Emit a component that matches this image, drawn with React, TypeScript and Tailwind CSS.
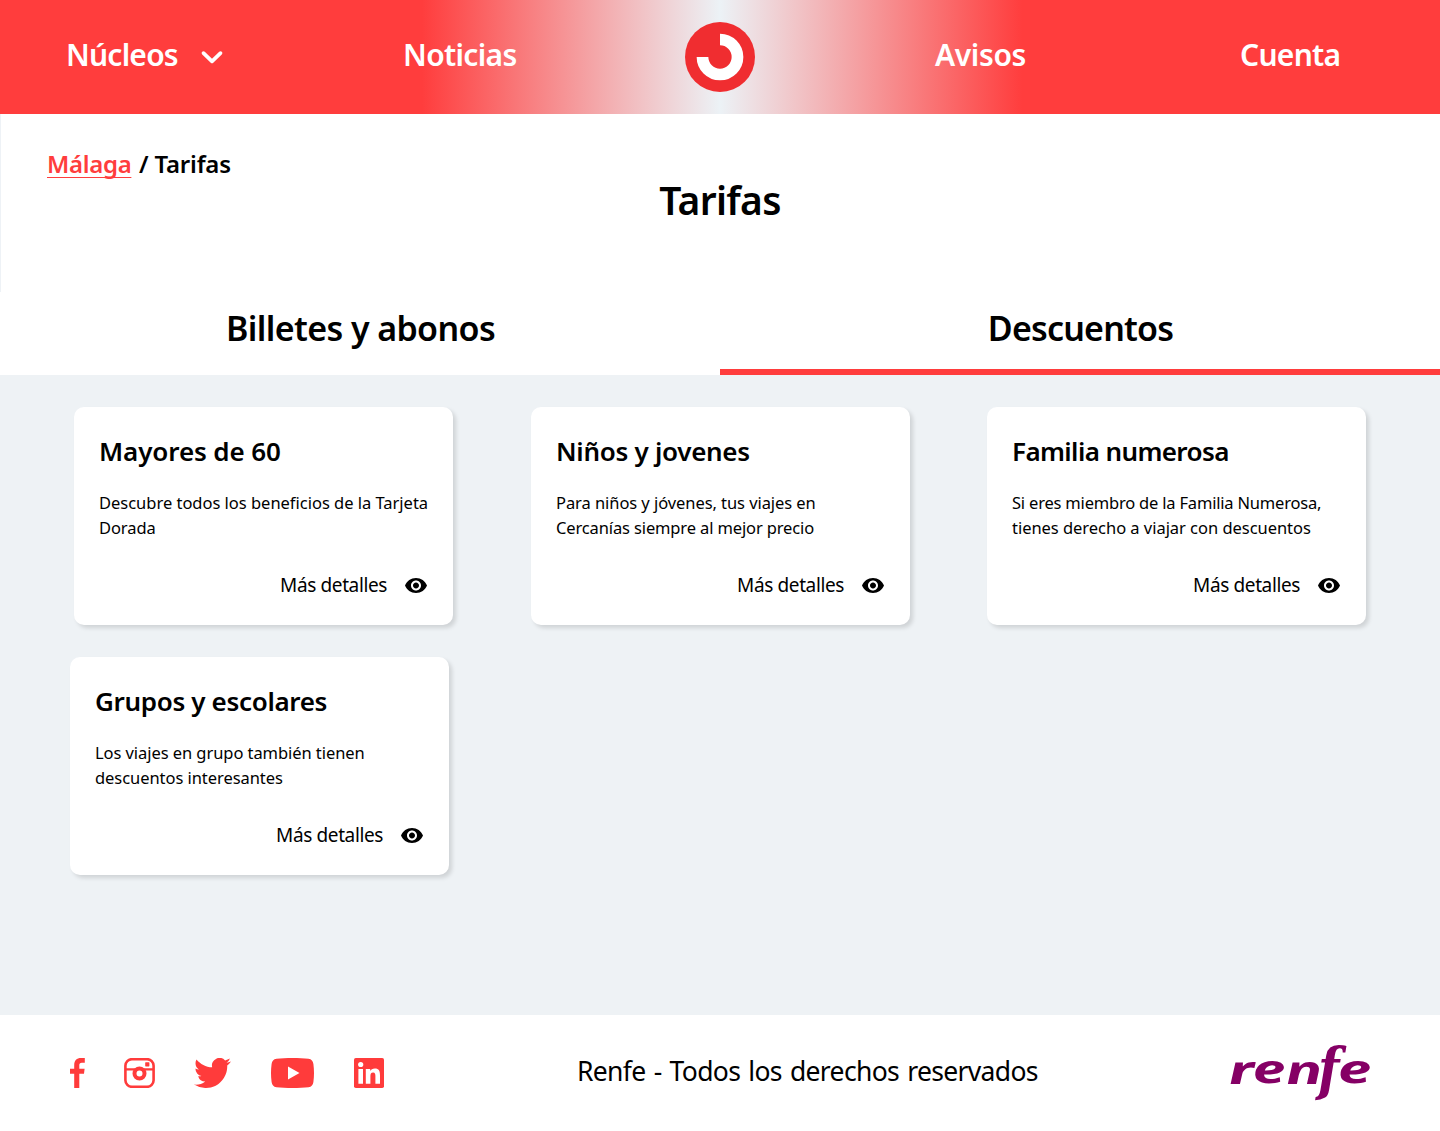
import React from "react";

function ChevronDown() {
  return (
    <svg width="24" height="16" viewBox="0 0 24 16" fill="none" aria-hidden="true">
      <path d="M3.5 4.1 12 12.300l8.500-8.200" stroke="#fff" strokeWidth="3.7" strokeLinecap="round" strokeLinejoin="round" />
    </svg>
  );
}

function CercaniasLogo() {
  return (
    <svg width="70" height="70" viewBox="0 0 70 70" role="img" aria-label="Cercanías">
      <circle cx="35" cy="35" r="35" fill="#f02d30" />
      <path d="M35 17.500A17.500 17.500 0 1 1 17.500 35" fill="none" stroke="#fff" strokeWidth="11.7" />
    </svg>
  );
}

function EyeIcon() {
  return (
    <svg className="mt-px" width="22" height="15" viewBox="1 4.5 22 15" aria-hidden="true">
      <path d="M12 4.5C7 4.5 2.73 7.61 1 12c1.73 4.39 6 7.5 11 7.5s9.27-3.11 11-7.5c-1.73-4.39-6-7.5-11-7.5zM12 17c-2.76 0-5-2.24-5-5s2.24-5 5-5 5 2.24 5 5-2.24 5-5 5zm0-8c-1.66 0-3 1.34-3 3s1.34 3 3 3 3-1.34 3-3-1.34-3-3-3z" />
    </svg>
  );
}

function SocialLinks() {
  return (
    <div className="flex h-[30px] items-center text-[#ff3b3b]">
      <svg width="15" height="30" viewBox="0 0 15 30" fill="currentColor" aria-label="Facebook">
        <path d="M4.2 30V15.8H0v-5.1h4.2V7.2C4.2 2.5 6.8 0 10.9 0H14.800v4.800h-3C9.900 4.800 9.300 5.700 9.300 7.300v3.400h5.300l-.6 5.100H9.300V30z" />
      </svg>
      <svg className="ml-[39px]" width="31" height="30" viewBox="0 0 31 30" fill="none" stroke="currentColor" aria-label="Instagram">
        <rect x="1.400" y="1.200" width="28.200" height="27.600" rx="6.500" strokeWidth="2.600" />
        <path d="M1 11.400h10M20 11.400H30" strokeWidth="2.200" />
        <circle cx="15.500" cy="15.500" r="5" strokeWidth="4" />
        <rect x="21.200" y="4.200" width="4.200" height="4.200" rx="0.600" fill="currentColor" stroke="none" />
      </svg>
      <svg className="ml-[39px]" width="37" height="30" viewBox="0 2.250 24 19.500" fill="currentColor" preserveAspectRatio="none" aria-label="Twitter">
        <path d="M23.953 4.57a10 10 0 01-2.825.775 4.958 4.958 0 002.163-2.723c-.951.555-2.005.959-3.127 1.184a4.92 4.92 0 00-8.384 4.482C7.69 8.095 4.067 6.13 1.64 3.162a4.822 4.822 0 00-.666 2.475c0 1.71.87 3.213 2.188 4.096a4.904 4.904 0 01-2.228-.616v.06a4.923 4.923 0 003.946 4.827 4.996 4.996 0 01-2.212.085 4.936 4.936 0 004.604 3.417 9.867 9.867 0 01-6.102 2.105c-.39 0-.779-.023-1.17-.067a13.995 13.995 0 007.557 2.209c9.053 0 13.998-7.496 13.998-13.985 0-.21 0-.42-.015-.63A9.935 9.935 0 0024 4.59z" />
      </svg>
      <svg className="ml-10" width="43" height="30" viewBox="0 0 43 30" fill="currentColor" aria-label="YouTube">
        <path d="M5.500.8C14 -.2 29 -.2 37.500.8 40.500 1.200 42 3 42.400 6c.8 6 .8 12 0 18-.4 3-1.900 4.800-4.900 5.200-8.500 1-23.500 1-32 0C2.500 28.800 1 27 .6 24-.2 18-.2 12 .6 6 1 3 2.500 1.200 5.500.8zM17 8.500v13L28.500 15z" />
      </svg>
      <svg className="ml-10" width="30" height="30" viewBox="0 0 30 30" aria-label="LinkedIn">
        <rect width="30" height="30" rx="1.800" fill="currentColor" />
        <circle cx="6.700" cy="6.500" r="2.600" fill="#fff" />
        <path d="M4.400 11h4.600v14.800H4.400zM11.800 11h4.400v2.100c.8-1.500 2.400-2.500 4.600-2.500 4.200 0 5.200 2.700 5.200 6.800v8.400h-4.600v-7.500c0-2-.2-3.800-2.300-3.800-2.200 0-2.700 1.700-2.700 3.700v7.600h-4.600z" fill="#fff" />
      </svg>
    </div>
  );
}

function RenfeLogo() {
  return (
    <svg className="overflow-visible" width="141" height="56" viewBox="0 0 141 56" fill="#850065" role="img" aria-label="renfe">
      <g fontFamily="'Noto Sans', sans-serif" fontWeight="700" fontStyle="italic" fontSize="39.500">
        <text transform="translate(-.5 38.500) scale(1.580 1) skewX(4)">r</text>
        <text transform="translate(23.200 38.300) scale(1.520 1) skewX(3)">e</text>
        <text transform="translate(56.700 38.500) scale(1.550 1) skewX(4)">n</text>
        <text transform="translate(108.400 38.300) scale(1.550 1) skewX(3)">e</text>
      </g>
      <text transform="translate(88 44) scale(.87 1)" fontFamily="'DejaVu Serif', serif" fontWeight="700" fontStyle="italic" fontSize="57">
        f
      </text>
    </svg>
  );
}

type Discount = {
  title: string;
  titleClass: string;
  lines: { text: string; className: string }[];
  className: string;
};

const discounts: Discount[] = [
  {
    title: "Mayores de 60",
    titleClass: "tracking-[-0.004em]",
    lines: [
      { text: "Descubre todos los beneficios de la Tarjeta", className: "tracking-[-0.001em]" },
      { text: "Dorada", className: "tracking-[-0.005em]" },
    ],
    className: "",
  },
  {
    title: "Niños y jovenes",
    titleClass: "tracking-[-0.011em]",
    lines: [
      { text: "Para niños y jóvenes, tus viajes en", className: "tracking-[-0.004em]" },
      { text: "Cercanías siempre al mejor precio", className: "tracking-[-0.008em]" },
    ],
    className: "",
  },
  {
    title: "Familia numerosa",
    titleClass: "tracking-[-0.023em]",
    lines: [
      { text: "Si eres miembro de la Familia Numerosa,", className: "tracking-[-0.0118em]" },
      { text: "tienes derecho a viajar con descuentos", className: "tracking-[-0.002em]" },
    ],
    className: "-ml-px",
  },
  {
    title: "Grupos y escolares",
    titleClass: "tracking-[-0.013em]",
    lines: [
      { text: "Los viajes en grupo también tienen", className: "tracking-[-0.004em]" },
      { text: "descuentos interesantes", className: "tracking-[-0.0034em]" },
    ],
    className: "-ml-1",
  },
];

function DiscountCard({ title, titleClass, lines, className }: Discount) {
  return (
    <article className={`h-[218px] w-[379px] rounded-[10px] bg-white px-[25px] pt-[26px] shadow-[3px_3px_4px_rgba(0,0,0,0.13)] ${className}`}>
      <h3 className={`text-[26px] leading-9 font-semibold whitespace-nowrap ${titleClass}`}>{title}</h3>
      <p className="mt-[21px] text-[16.5px] leading-[25px] whitespace-nowrap">
        {lines.map((line) => (
          <span key={line.text} className={`block ${line.className}`}>
            {line.text}
          </span>
        ))}
      </p>
      <a className="mt-[31px] mr-px flex items-center justify-end gap-[18px]">
        <span className="text-[19px] leading-7 tracking-[-0.02em]">Más detalles</span>
        <EyeIcon />
      </a>
    </article>
  );
}

export default function App() {
  return (
    <div className="flex h-[1131px] w-[1440px] flex-col overflow-hidden bg-white font-['Noto_Sans',sans-serif] text-black">
      <header className="h-[114px] bg-[linear-gradient(90deg,#ff3d3d_29.3%,#ecf2f6_50%,#ff3d3d_71%)]">
        <nav className="flex h-full items-center pl-[66px] text-[30px] leading-10 font-semibold text-white">
          <div className="flex w-[337px] items-center gap-[22px]">
            <span className="-mt-1 tracking-[-0.026em]">Núcleos</span>
            <ChevronDown />
          </div>
          <span className="-mt-1 w-[282px] tracking-[-0.022em]">Noticias</span>
          <CercaniasLogo />
          <span className="-mt-1 ml-[180px] w-[305px] tracking-[-0.012em]">Avisos</span>
          <span className="-mt-1 tracking-[-0.024em]">Cuenta</span>
        </nav>
      </header>

      <section className="h-[178px] border-l border-[#eef2f6] pt-[34px]">
        <div className="flex h-8 pl-[46px] text-2xl leading-8 font-semibold">
          <div className="w-[92px]">
            <a className="tracking-[-0.013em] text-[#ff3d3d] underline decoration-[1.3px] underline-offset-[4px] [text-decoration-skip-ink:none]">
              Málaga
            </a>
          </div>
          <span className="tracking-[-0.008em]">/ Tarifas</span>
        </div>
        <h1 className="-mt-1 -ml-px text-center text-[39px] leading-[48px] font-semibold tracking-[-0.0177em]">Tarifas</h1>
      </section>

      <div className="grid h-[83px] grid-cols-2 text-center text-[34px] leading-[48px] font-semibold">
        <div className="pt-3 pl-px tracking-[-0.018em]">Billetes y abonos</div>
        <div className="border-b-[6px] border-[#ff3d3d] pt-3 pl-px tracking-[-0.024em]">Descuentos</div>
      </div>

      <main className="h-[640px] bg-[#eef2f5] pt-8 pl-[74px]">
        <div className="grid grid-cols-[repeat(3,379px)] gap-x-[78px] gap-y-8">
          {discounts.map((discount) => (
            <DiscountCard key={discount.title} {...discount} />
          ))}
        </div>
      </main>

      <footer className="flex flex-1 items-center pl-[70px]">
        <SocialLinks />
        <p className="-mt-1 ml-[193px] w-[653px] text-[26.5px] leading-9 tracking-[-0.025em] [word-spacing:0.07em]">
          Renfe - Todos los derechos reservados
        </p>
        <RenfeLogo />
      </footer>
    </div>
  );
}
